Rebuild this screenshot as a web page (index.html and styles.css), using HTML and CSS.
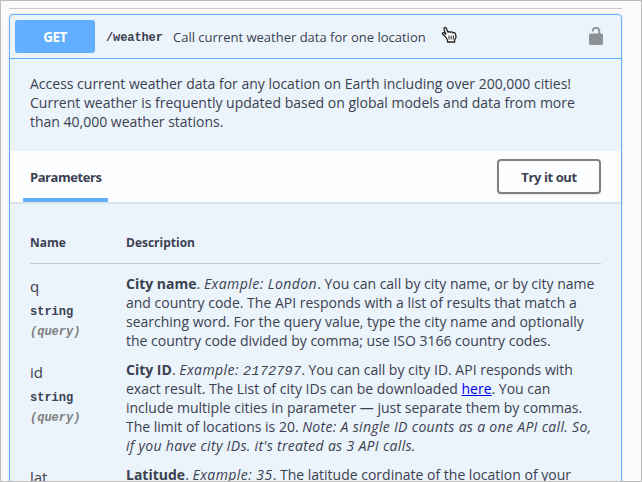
FILE: index.html
```html
<!DOCTYPE html>
<html lang="en">
<head>
<meta charset="utf-8">
<title>Weather API</title>
<link rel="stylesheet" href="styles.css">
</head>
<body>
<main class="frame">
  <section class="opblock">
    <header class="summary">
      <span class="method">GET</span>
      <code class="path">/weather</code>
      <span class="summary-text">Call current weather data for one location</span>
      <svg class="lock" width="14" height="18" viewBox="0 0 14 18"><path d="M3.700 4.600V4a3.300 3.200 0 0 1 6.600 0V8" fill="none" stroke="#8d9195" stroke-width="1.900"/><rect x="0" y="6.500" width="14" height="11.500" rx="1.700" fill="#8d9195"/></svg>
    </header>
    <div class="description">Access current weather data for any location on Earth including over 200,000 cities!<br>Current weather is frequently updated based on global models and data from more<br>than 40,000 weather stations.</div>
    <div class="section-header">
      <h4 class="tab"><span class="tab-label">Parameters</span></h4>
      <button class="try"><span class="try-label">Try it out</span></button>
    </div>
    <div class="parameters">
      <div class="row head"><div>Name</div><div>Description</div></div>
      <div class="row">
        <div><div class="name">q</div><div class="type">string</div><div class="in">(query)</div></div>
        <p class="text"><b>City name</b>. <i class="wide">Example: London</i>. You can call by city name, or by city name<br>and country code. The API responds with a list of results that match a<br>searching word. For the query value, type the city name and optionally<br>the country code divided by comma; use ISO 3166 country codes.</p>
      </div>
      <div class="row">
        <div><div class="name">id</div><div class="type">string</div><div class="in">(query)</div></div>
        <p class="text"><b>City ID</b>. <i class="wide">Example: <code>2172797</code></i>. You can call by city ID. API responds with<br>exact result. The List of city IDs can be downloaded <a href="#">here</a>. You can<br>include multiple cities in parameter — just separate them by commas.<br>The limit of locations is 20. <i>Note: A single ID counts as a one API call. So,<br>if you have city IDs. it's treated as 3 API calls.</i></p>
      </div>
      <div class="row">
        <div class="name">lat</div>
        <p class="text"><b>Latitude</b>. <i class="wide">Example: 35</i>. The latitude cordinate of the location of your</p>
      </div>
    </div>
  </section>
  <svg class="cursor" width="17" height="18" viewBox="0 0 17 18"><path d="M4.700 11 1.700 8.200C.8 7 2.200 6.200 3.200 7L4.800 8.300 3 3.200C2.500 1.500 4.600.8 5.300 2.400L7 6.300C7.500 5.300 9 5.400 9.400 6.500 10 5.600 11.500 5.800 12 7 13 6.300 14.400 6.800 14.600 8.200L15 11.500 13.600 14V16H6.500V14.200Z" fill="#fff" stroke="#222" stroke-width="1.300" stroke-linejoin="round"/><path d="M8 9.500V13.500M10.200 9.500V13.500M12.400 9.500V13.500" stroke="#222" stroke-width="1"/></svg>
</main>
</body>
</html>
```
FILE: styles.css
```css
* { box-sizing: border-box; }
body { margin: 0; overflow: hidden; }
.frame {
  position: relative;
  height: 482px;
  overflow: hidden;
  padding: 7px 19px 0 8px;
  border: 1px solid #bcbcbc;
  background: #fafafa;
  color: #3b4151;
  font: 14px/19px "Open Sans", sans-serif;
  white-space: nowrap;
}
.frame::before {
  content: "";
  display: block;
  height: 1px;
  margin-bottom: 5px;
  background: #c8c9cc;
}
.opblock {
  height: 600px;
  border: 1px solid #61affe;
  border-radius: 4px;
  background: #ebf3fb;
  box-shadow: 0 0 3px rgba(0, 0, 0, .12);
}
.summary {
  display: flex;
  align-items: center;
  height: 44px;
  padding: 0 18px 0 5px;
  border-bottom: 1px solid #61affe;
}
.method {
  width: 80px;
  height: 33px;
  border-radius: 3px;
  background: #61affe;
  color: #fff;
  font-weight: 700;
  font-size: 13.500px;
  line-height: 34px;
  letter-spacing: -.6px;
  text-align: center;
}
.path {
  width: 67px;
  padding: 2px 0 0 11px;
  box-sizing: content-box;
  font: 600 12px "Liberation Mono", monospace;
  letter-spacing: -.1px;
}
.summary-text { flex: 1; padding-top: 2px; font-size: 13px; }
.lock { margin-top: -1px; }
.description { height: 92px; padding: 15px 20px; }
.section-header {
  display: flex;
  justify-content: space-between;
  align-items: center;
  height: 51px;
  padding: 0 20px 0 13px;
  background: rgba(255, 255, 255, .85);
  box-shadow: 0 1px 2px rgba(0, 0, 0, .12);
}
.tab {
  width: 85px;
  height: 51px;
  margin: 0;
  padding-left: 7px;
  border-bottom: 4px solid #61affe;
  font-size: 13px;
  line-height: 52px;
  letter-spacing: -.45px;
}
.try {
  width: 104px;
  height: 35px;
  padding: 0;
  border: 2px solid #808080;
  border-radius: 4px;
  background: transparent;
  box-shadow: 0 1px 2px rgba(0, 0, 0, .1);
  color: #3b4151;
  font: 700 13px "Open Sans", sans-serif;
  letter-spacing: -.4px;
}
.parameters { padding: 20px; }
.row { display: grid; grid-template-columns: 96px 1fr; margin-bottom: 10px; }
.head {
  height: 42px;
  padding-top: 11px;
  border-bottom: 1px solid #c6ccd5;
  font-size: 12px;
  font-weight: 700;
}
.text { margin: 0; }
.text i { letter-spacing: .32px; }
.text .wide { letter-spacing: .45px; }
.text code { font: italic 13.500px/1 "Liberation Mono", monospace; letter-spacing: .2px; }
.text a { color: #00e; }
.name { padding-top: 3px; font-size: 15px; }
.type { padding-top: 7px; font: 600 12px/19px "Liberation Mono", monospace; }
.in { padding-top: 1px; color: #808080; font: italic 600 12px/19px "Liberation Mono", monospace; }
.cursor { position: absolute; left: 440px; top: 25px; }
```
